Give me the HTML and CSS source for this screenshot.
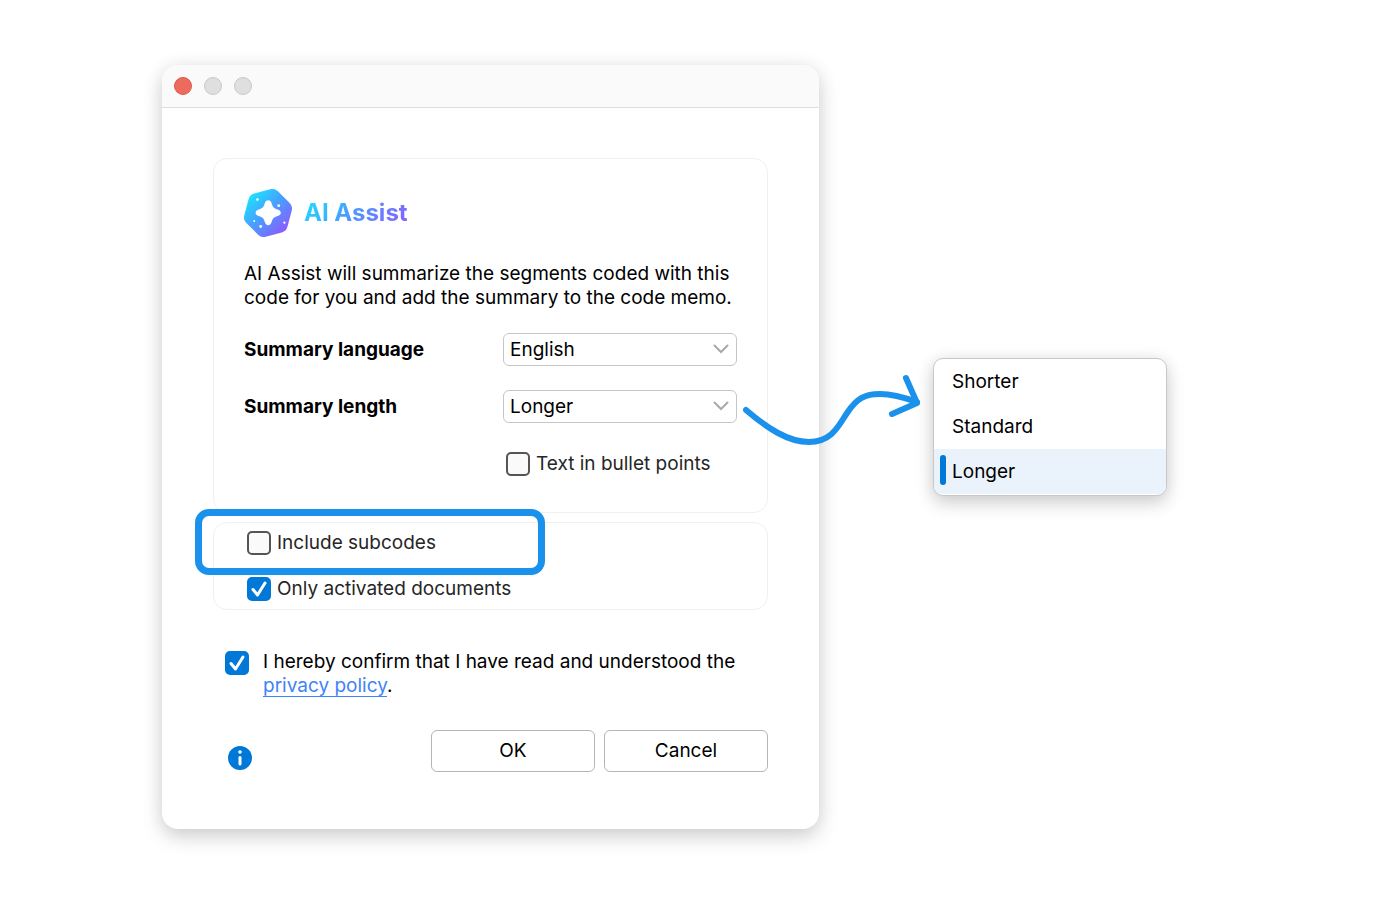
FILE: index.html
```
<!DOCTYPE html>
<html lang="en">
<head>
    <meta charset="UTF-8">
    <meta name="viewport" content="width=device-width, initial-scale=1.0">
    <title>AI Assist</title>
    <link rel="stylesheet" href="styles.css">
</head>
<body>
    <main class="stage">
        <form class="dialog">
            <div class="titlebar">
                <button type="button" class="dot dot-close" aria-label="Close"></button>
                <button type="button" class="dot" aria-label="Minimize"></button>
                <button type="button" class="dot" aria-label="Zoom"></button>
            </div>
            <div class="content">
                <section class="card">
                    <div class="brand">
                        <svg class="logo" viewBox="0 0 48 48" aria-hidden="true">
                            <defs>
                                <linearGradient id="brandFill" gradientUnits="userSpaceOnUse" x1="7" y1="6" x2="41" y2="42">
                                    <stop offset="0" stop-color="#1ce0ff"/>
                                    <stop offset="0.5" stop-color="#4b9bff"/>
                                    <stop offset="1" stop-color="#8b5cff"/>
                                </linearGradient>
                            </defs>
                            <path d="M28.3 8 40 19.700 35.700 35.700 19.700 40 8 28.300 12.300 12.300Z" fill="url(#brandFill)" stroke="url(#brandFill)" stroke-width="16" stroke-linejoin="round"/>
                            <path d="M24.2 11.2c1.800 0 2.800 1.200 3.400 3.100 1.100 3.800 2.200 5 6 6.100 1.900.6 3.200 1.600 3.200 3.300s-1.300 2.700-3.200 3.300c-3.800 1.100-4.900 2.300-6 6.100-.6 1.900-1.600 3.100-3.400 3.100s-2.800-1.200-3.400-3.100c-1.100-3.800-2.200-5-6-6.100-1.900-.6-3.200-1.600-3.200-3.300s1.300-2.700 3.200-3.300c3.800-1.100 4.900-2.300 6-6.100.6-1.900 1.600-3.100 3.400-3.100Z" fill="#fff"/>
                            <g fill="#fff">
                                <circle cx="13.4" cy="10.5" r="1.3"/>
                                <circle cx="34.7" cy="16.7" r="1.4"/>
                                <circle cx="10.2" cy="32" r="0.9"/>
                                <circle cx="16.7" cy="37.5" r="1.4"/>
                                <circle cx="40.4" cy="33.7" r="1.1"/>
                            </g>
                        </svg>
                        <h1>AI Assist</h1>
                    </div>
                    <p class="intro">AI Assist will summarize the segments coded with this<br>code for you and add the summary to the code memo.</p>
                    <div class="field">
                        <label for="language">Summary language</label>
                        <div class="control">
                            <select id="language">
                                <option>English</option>
                            </select>
                            <svg class="chevron" viewBox="0 0 16 10" aria-hidden="true"><path d="M1.5 1.5 8 8l6.5-6.5"/></svg>
                        </div>
                    </div>
                    <div class="field">
                        <label for="length">Summary length</label>
                        <div class="control">
                            <select id="length">
                                <option>Shorter</option>
                                <option>Standard</option>
                                <option selected>Longer</option>
                            </select>
                            <svg class="chevron" viewBox="0 0 16 10" aria-hidden="true"><path d="M1.5 1.5 8 8l6.5-6.5"/></svg>
                            <svg class="arrow" viewBox="0 0 184 80" aria-hidden="true">
                                <path d="M6 40C27 58 48 72 69 72 92 72 99 55 107 43 117 28 125 24 140 24 152 24 163 27 177 32"/>
                                <path d="M166 8 177 33 152 44"/>
                            </svg>
                        </div>
                    </div>
                    <label class="check check-bullets">
                        <span class="box">
                            <input type="checkbox">
                            <svg viewBox="0 0 24 24" aria-hidden="true"><path d="M6 12.5 10.500 18 18 6"/></svg>
                        </span>
                        Text in bullet points
                    </label>
                </section>

                <section class="card card-scope">
                    <label class="check">
                        <span class="box">
                            <input type="checkbox">
                            <svg viewBox="0 0 24 24" aria-hidden="true"><path d="M6 12.5 10.5 18 18 6"/></svg>
                        </span>
                        Include subcodes
                    </label>
                    <label class="check">
                        <span class="box">
                            <input type="checkbox" checked>
                            <svg viewBox="0 0 24 24" aria-hidden="true"><path d="M6 12.5 10.5 18 18 6"/></svg>
                        </span>
                        Only activated documents
                    </label>
                    <div class="highlight"></div>
                </section>

                <div class="confirm">
                    <span class="box">
                        <input type="checkbox" id="confirm" checked>
                        <svg viewBox="0 0 24 24" aria-hidden="true"><path d="M6 12.5 10.5 18 18 6"/></svg>
                    </span>
                    <label for="confirm">I hereby confirm that I have read and understood the<br><a href="#privacy">privacy policy</a>.</label>
                </div>

                <div class="actions">
                    <button type="button" class="info" aria-label="Help">
                        <svg viewBox="0 0 24 24" aria-hidden="true">
                            <circle cx="12" cy="12" r="12" fill="#0078d7"/>
                            <circle cx="12" cy="6" r="1.8" fill="#fff"/>
                            <path d="M12 11.5v6.5" stroke="#fff" stroke-width="3" stroke-linecap="round"/>
                        </svg>
                    </button>
                    <button type="button" class="button">OK</button>
                    <button type="button" class="button">Cancel</button>
                </div>
            </div>
        </form>

        <div class="menu" role="listbox" aria-label="Summary length">
            <button type="button" class="menu-item" role="option" aria-selected="false">Shorter</button>
            <button type="button" class="menu-item" role="option" aria-selected="false">Standard</button>
            <button type="button" class="menu-item selected" role="option" aria-selected="true">Longer</button>
        </div>
    </main>
</body>
</html>
```
FILE: styles.css
```
* {
    box-sizing: border-box;
}
body {
    margin: 0;
    background-color: #fff;
    color: #000;
    font-family: Inter, "Liberation Sans", sans-serif;
    font-size: 19px;
    line-height: 24px;
}
button, select, input {
    margin: 0;
    font: inherit;
    color: inherit;
}
.stage {
    display: flex;
    align-items: flex-start;
    gap: 114px;
    padding: 65px 229px 72px 162px;
}

/* dialog window */
.dialog {
    flex: 1;
    border-radius: 16px;
    background-color: #fff;
    box-shadow: 0 8px 20px rgba(0, 0, 0, 0.17), 0 0 20px rgba(0, 0, 0, 0.06);
}
.titlebar {
    display: flex;
    gap: 12px;
    padding: 12px;
    border-bottom: 1px solid #dedede;
    border-radius: 16px 16px 0 0;
    background-color: #fafafa;
}
.dot {
    width: 18px;
    height: 18px;
    padding: 0;
    border: 1px solid #c9c9c9;
    border-radius: 50%;
    background-color: #dfdfdf;
}
.dot-close {
    border-color: #e0584e;
    background-color: #ed6a5e;
}
.content {
    padding: 50px 51px 57px;
}
.card {
    position: relative;
    padding: 30px 30px 36px;
    border: 1px solid #f0f0f0;
    border-radius: 14px;
}
.brand {
    display: flex;
    align-items: center;
    gap: 12px;
}
.logo {
    width: 48px;
    height: 48px;
}
h1 {
    margin: 0;
    font-size: 24px;
    font-weight: 700;
    background: linear-gradient(135deg, #1ce0ff, #4b9bff 45%, #8b5cff);
    -webkit-background-clip: text;
    background-clip: text;
    color: transparent;
}
.intro {
    margin: 25px 0 23px;
    white-space: nowrap;
}
.field {
    display: flex;
    align-items: center;
    justify-content: space-between;
    margin-bottom: 24px;
}
.field label {
    font-weight: 700;
}
.control {
    position: relative;
    width: 234px;
}
select {
    display: block;
    width: 100%;
    height: 33px;
    padding: 0 30px 0 6px;
    border: 1px solid #c6c6c6;
    border-radius: 6px;
    background-color: #fff;
    appearance: none;
}
.chevron {
    position: absolute;
    top: 11px;
    right: 8px;
    width: 16px;
    height: 10px;
    fill: none;
    stroke: #a9a9a9;
    stroke-width: 2;
    stroke-linecap: round;
    pointer-events: none;
}
.arrow {
    position: absolute;
    top: -20px;
    left: calc(100% + 3px);
    z-index: 1;
    width: 184px;
    height: 80px;
    fill: none;
    stroke: #1a91eb;
    stroke-width: 6;
    stroke-linecap: round;
    stroke-linejoin: round;
    pointer-events: none;
}

/* tick boxes */
.check {
    display: flex;
    align-items: center;
    gap: 6px;
    color: #262626;
}
.check-bullets {
    width: 231px;
    margin: 29px 0 0 auto;
    white-space: nowrap;
}
.box {
    position: relative;
    flex: none;
    width: 24px;
    height: 24px;
}
.box input {
    display: block;
    width: 24px;
    height: 24px;
    border: 2px solid #555;
    border-radius: 5px;
    background-color: #fafafa;
    appearance: none;
}
.box input:checked {
    border-color: #0078d7;
    background-color: #0078d7;
}
.box svg {
    display: none;
    position: absolute;
    inset: 0;
    fill: none;
    stroke: #fff;
    stroke-width: 3;
    stroke-linecap: round;
    stroke-linejoin: round;
    pointer-events: none;
}
.box input:checked + svg {
    display: block;
}
.card-scope {
    display: grid;
    gap: 22px;
    margin-top: 9px;
    padding: 8px 33px;
}
.highlight {
    position: absolute;
    top: -14px;
    left: -19px;
    width: 350px;
    height: 66px;
    border: 7px solid #1a91eb;
    border-radius: 14px;
    pointer-events: none;
}

.confirm {
    display: flex;
    align-items: flex-start;
    gap: 14px;
    margin: 40px 0 32px 12px;
    white-space: nowrap;
}
.confirm .box {
    margin-top: 1px;
}
.confirm a {
    color: #3f83f8;
    text-decoration: underline 1px;
    text-decoration-skip-ink: none;
    text-underline-offset: 4px;
}
.actions {
    display: flex;
    gap: 9px;
}
.button {
    width: 164px;
    height: 42px;
    padding: 0;
    border: 1px solid #b5b5b5;
    border-radius: 6px;
    background-color: #fff;
}
.info {
    align-self: flex-end;
    width: 24px;
    height: 24px;
    margin: 0 auto 2px 15px;
    padding: 0;
    border: none;
    background: none;
}
.info svg {
    display: block;
}

/* open length menu */
.menu {
    flex: none;
    width: 234px;
    margin-top: 293px;
    padding-bottom: 1px;
    border: 1px solid #c8c8c8;
    border-radius: 10px;
    background-color: #fff;
    box-shadow: 0 8px 18px rgba(0, 0, 0, 0.16), 0 0 16px rgba(0, 0, 0, 0.08);
}
.menu-item {
    display: block;
    position: relative;
    width: 100%;
    height: 45px;
    padding: 0 18px;
    border: none;
    background: none;
    text-align: left;
}
.menu-item.selected {
    border-radius: 0 0 8px 8px;
    background-color: #eaf2fb;
}
.menu-item.selected::before {
    content: "";
    position: absolute;
    top: 6px;
    left: 6px;
    width: 6px;
    height: 30px;
    border-radius: 3px;
    background-color: #0078d7;
}
```
